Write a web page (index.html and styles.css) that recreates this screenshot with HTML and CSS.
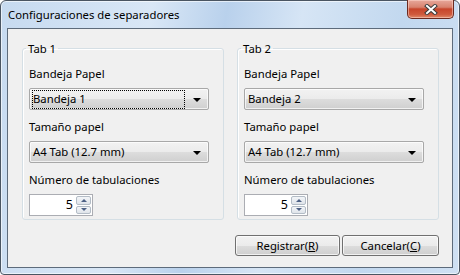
FILE: index.html
```html
<!DOCTYPE html>
<html lang="es">
<head>
  <meta charset="UTF-8">
  <title>Configuraciones de separadores</title>
  <link rel="stylesheet" href="styles.css">
</head>
<body>
  <div class="window">
    <div class="titlebar">
      <span class="title">Configuraciones de separadores</span>
      <button class="close-btn" aria-label="Cerrar">
        <svg width="14" height="11" viewBox="0 0 14 11">
          <path d="M3 2 L11 9 M11 2 L3 9" stroke="#3b3b3b" stroke-width="4" stroke-linecap="square"/>
          <path d="M3 2 L11 9 M11 2 L3 9" stroke="#ffffff" stroke-width="2" stroke-linecap="square"/>
        </svg>
      </button>
    </div>
    <div class="client">
      <div class="groups">
        <fieldset class="group">
          <legend>Tab 1</legend>
          <div class="label">Bandeja Papel</div>
          <div class="combo focused">
            <span class="combo-text"><span class="focus-rect">Bandeja 1</span></span>
            <span class="arrow"></span>
          </div>
          <div class="label">Tamaño papel</div>
          <div class="combo">
            <span class="combo-text">A4 Tab (12.7 mm)</span>
            <span class="arrow"></span>
          </div>
          <div class="label">Número de tabulaciones</div>
          <div class="spin">
            <span class="spin-value">5</span>
            <span class="spin-btns">
              <span class="spin-btn up"></span>
              <span class="spin-btn down"></span>
            </span>
          </div>
        </fieldset>
        <fieldset class="group">
          <legend>Tab 2</legend>
          <div class="label">Bandeja Papel</div>
          <div class="combo">
            <span class="combo-text">Bandeja 2</span>
            <span class="arrow"></span>
          </div>
          <div class="label">Tamaño papel</div>
          <div class="combo">
            <span class="combo-text">A4 Tab (12.7 mm)</span>
            <span class="arrow"></span>
          </div>
          <div class="label">Número de tabulaciones</div>
          <div class="spin">
            <span class="spin-value">5</span>
            <span class="spin-btns">
              <span class="spin-btn up"></span>
              <span class="spin-btn down"></span>
            </span>
          </div>
        </fieldset>
      </div>
      <div class="actions">
        <button class="btn">Registrar(<u>R</u>)</button>
        <button class="btn">Cancelar(<u>C</u>)</button>
      </div>
    </div>
  </div>
</body>
</html>
```

FILE: styles.css
```css
* {
  box-sizing: border-box;
  margin: 0;
  padding: 0;
}
body {
  font-family: "Noto Sans", "Open Sans", sans-serif;
  font-size: 11.3px;
  color: #000;
  background: #fff;
}
/* Window frame */
.window {
  width: 460px;
  height: 275px;
  border: 1px solid #4a5562;
  border-radius: 6px 6px 4px 4px;
  background: linear-gradient(100deg, #c6daf0 0%, #d9e7f6 30%, #b9d1ec 45%, #d6e5f5 60%, #c2d8ef 80%, #cfe0f3 100%);
  box-shadow: inset 0 0 0 1px rgba(255, 255, 255, 0.6);
  padding: 0 6px 6px 6px;
  display: flex;
  flex-direction: column;
}
.titlebar {
  height: 27px;
  display: flex;
  align-items: flex-start;
  justify-content: space-between;
}
.title {
  margin-top: 6px;
  padding-left: 1px;
  line-height: 16px;
}
.close-btn {
  width: 47px;
  height: 19px;
  margin-top: -1px;
  margin-right: -1px;
  border: 1px solid #6b2a20;
  border-top: none;
  border-radius: 0 0 5px 5px;
  background: linear-gradient(#e7a89b 0%, #d8826e 40%, #c7452b 50%, #cf5a3d 80%, #e08b6b 100%);
  box-shadow: inset 0 0 0 1px rgba(255, 220, 210, 0.5);
  display: flex;
  align-items: center;
  justify-content: center;
}
/* Client area */
.client {
  flex: 1;
  background: #f0f0f0;
  border: 1px solid #5d6b7b;
  padding: 0 13px 0 14px;
  display: flex;
  flex-direction: column;
}
.groups {
  display: flex;
  gap: 13px;
  margin-top: 12px;
}
.group {
  width: 202px;
  height: 179px;
  border: 1px solid #d5dfe5;
  border-radius: 3px;
  box-shadow: inset 1px 1px 0 #fff;
  padding: 0 0 0 6px;
}
.group legend {
  margin-left: -3px;
  padding: 0 2px;
  line-height: 15px;
}
.label {
  line-height: 15px;
  margin-top: 10px;
}
.combo + .label {
  margin-top: 9px;
}
.combo {
  width: 180px;
  height: 22px;
  margin-top: 7px;
  border: 1px solid #a8a8a8;
  border-radius: 2px;
  background: linear-gradient(#f2f2f2 0%, #ebebeb 50%, #dddddd 50%, #cfcfcf 100%);
  box-shadow: inset 0 0 0 1px rgba(255, 255, 255, 0.7);
  display: flex;
  align-items: center;
  padding: 0 2px;
}
.combo-text {
  flex: 1;
  padding-left: 1px;
  line-height: 18px;
}
.focused .combo-text {
  border: 1px dotted #000;
  height: 19px;
  margin-right: 8px;
  display: flex;
  align-items: center;
  padding-left: 0;
}
.arrow {
  width: 0;
  height: 0;
  border-left: 4px solid transparent;
  border-right: 4px solid transparent;
  border-top: 4px solid #000;
  margin: 1px 5px 0 0;
}
/* Spin box */
.spin {
  width: 64px;
  height: 22px;
  margin-top: 7px;
  border: 1px solid #abadb3;
  background: #fff;
  display: flex;
}
.spin-value {
  flex: 1;
  text-align: right;
  padding-right: 3px;
  line-height: 19px;
  font-size: 12.5px;
}
.spin-btns {
  width: 16px;
  display: flex;
  flex-direction: column;
  gap: 1px;
  padding: 1px 1px 1px 0;
}
.spin-btn {
  flex: 1;
  border: 1px solid #b3bcc6;
  border-radius: 2px;
  background: linear-gradient(#f3f5f8, #dfe4ea);
  display: flex;
  align-items: center;
  justify-content: center;
}
.spin-btn::after {
  content: "";
  border-left: 3px solid transparent;
  border-right: 3px solid transparent;
}
.spin-btn.up::after {
  border-bottom: 3px solid #4d6185;
}
.spin-btn.down::after {
  border-top: 3px solid #4d6185;
}
/* Buttons */
.actions {
  display: flex;
  justify-content: flex-end;
  gap: 2px;
  margin-top: 15px;
}
.btn {
  height: 21px;
  border: 1px solid #707070;
  border-radius: 3px;
  background: linear-gradient(#f2f2f2 0%, #ebebeb 50%, #dddddd 50%, #cfcfcf 100%);
  box-shadow: inset 0 0 0 1px rgba(255, 255, 255, 0.7);
  font-family: inherit;
  font-size: 11.3px;
  color: #000;
}
.btn:first-child {
  width: 105px;
}
.btn:last-child {
  width: 97px;
}
```
